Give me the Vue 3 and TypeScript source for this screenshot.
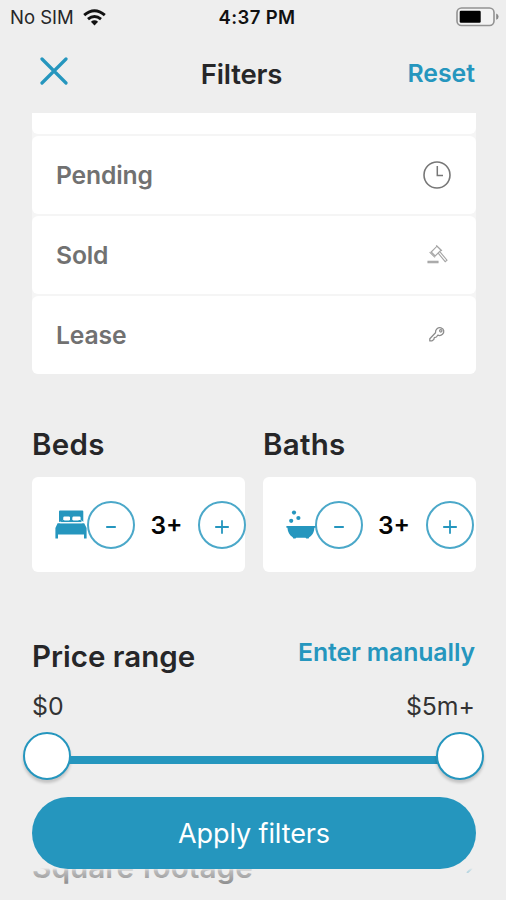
<script setup lang="ts">
import { ref } from 'vue'

type Counter = { key: 'beds' | 'baths'; label: string; count: number }

const statuses = ['Pending', 'Sold', 'Lease']
const counters = ref<Counter[]>([
  { key: 'beds', label: 'Beds', count: 3 },
  { key: 'baths', label: 'Baths', count: 3 },
])

function change(counter: Counter, step: number) {
  counter.count = Math.max(0, counter.count + step)
}
function reset() {
  counters.value.forEach((counter) => (counter.count = 0))
}
</script>

<template>
  <div class="screen">
    <div class="status-bar">
      <div class="carrier">
        <span>No SIM</span>
        <svg class="wifi" width="23" height="17" viewBox="0 0 23 17">
          <g fill="none" stroke="#111" stroke-width="2.9">
            <path d="M1.2 6.2Q11.5-2.8 21.8 6.2" />
            <path d="M5 10.2Q11.5 4.6 18 10.2" />
          </g>
          <path d="M7.9 12.7Q11.5 9.8 15.1 12.7L11.5 16.4Z" fill="#111" />
        </svg>
      </div>
      <span class="time">4:37 PM</span>
      <svg class="battery" width="43" height="20" viewBox="0 0 43 20">
        <rect x="1" y="1" width="37" height="17.5" rx="4.5" fill="#f3f3f3" stroke="#929292" stroke-width="1.6" />
        <rect x="3.7" y="3.7" width="21" height="12" rx="1.2" fill="#000" />
        <path d="M40.2 6.6Q42.6 7.4 42.6 9.7T40.2 12.8Z" fill="#888" />
      </svg>
    </div>

    <header class="header">
      <button class="close" aria-label="Close">
        <svg width="28" height="28" viewBox="0 0 28 28">
          <path d="M2 2L26 26M26 2L2 26" stroke="#2596be" stroke-width="3.2" stroke-linecap="round" />
        </svg>
      </button>
      <h1>Filters</h1>
      <button class="link reset" @click="reset">Reset</button>
    </header>

    <main class="content">
      <div class="status-list">
        <div class="status-row partial"></div>
        <div v-for="status in statuses" :key="status" class="status-row">
          <span>{{ status }}</span>
          <svg v-if="status === 'Pending'" width="30" height="30" viewBox="0 0 30 30" fill="none" stroke="#777">
            <circle cx="15" cy="15" r="13" stroke-width="1.6" />
            <path d="M15.3 6V15.5H21" stroke-width="1.5" />
          </svg>
          <svg v-else-if="status === 'Sold'" width="30" height="30" viewBox="0 0 30 30" fill="none" stroke="#a5a5a5" stroke-width="1.1">
            <path d="M9.2 12L15 6.2L19 10.2L13.2 16Z" />
            <path d="M7.6 12.2L13 17.3M14.2 5.3L20 10.8" />
            <path d="M16.2 13.2L23.2 21.7L25 20.2L17.8 11.7" />
            <path d="M6 21.2H16V22.7H6Z" fill="#aaa" />
          </svg>
          <svg v-else width="30" height="30" viewBox="0 0 30 30" fill="none" stroke="#8b8b8b" stroke-width="1.25" stroke-linejoin="round">
            <path d="M13.5 12.7C13.2 9.4 16 7.1 19 7.9C22.2 8.8 22.6 12.4 20.5 14.3C19 15.7 17.2 15.7 15.8 15.1L14.4 17L12.3 17.6L11.8 19.5L9.8 20.9H7.8V18.7Z" />
            <circle cx="18.8" cy="10.8" r="1.2" />
          </svg>
        </div>
      </div>

      <section class="counters">
        <div v-for="counter in counters" :key="counter.key" class="counter">
          <h2>{{ counter.label }}</h2>
          <div class="counter-card" :class="counter.key">
            <svg v-if="counter.key === 'beds'" class="room-icon" width="32" height="29" viewBox="0 0 32 29">
              <path d="M4 12V1.4Q4 .4 5 .4H27.3Q28.3 .4 28.3 1.4V12L25.6 10V7.6Q25.6 6.5 24.5 6.5H18.6Q17.5 6.5 17.5 7.6V10H15V7.6Q15 6.5 13.9 6.5H9.4Q8.3 6.5 8.3 7.6V10L6.5 12Z" fill="#2596be" />
              <path d="M8.3 9.9H25.6L27 12.3H5.4Z" fill="#2596be" />
              <rect x="8.8" y="7" width="6" height="3.5" rx="1" fill="#fff" />
              <rect x="17.6" y="7" width="6.4" height="3.5" rx="1" fill="#fff" />
              <path d="M2.6 13.3H29.2L31.6 18V28.5H29V24.6H3V28.5H.4V18Z" fill="#2596be" />
              <path d="M4.8 11.6L5.5 12.8H26.8L27.6 11.6" fill="none" stroke="#fff" stroke-width="1.1" />
            </svg>
            <svg v-else class="room-icon" width="30" height="29" viewBox="0 0 30 29" fill="#2596be">
              <circle cx="8" cy="2.6" r="2.1" />
              <circle cx="12.4" cy="8" r="2.1" />
              <circle cx="5.2" cy="10.8" r="2.1" />
              <path d="M.4 16H29.6V17.8H28.4C28 22.5 26.6 25.2 23.2 27.3L22.6 28.5H20.2L19.6 27.7H10.2L9.5 28.5H7.3L6.7 27.3C3.3 25.2 1.8 22 1.4 17.8H.4Z" />
            </svg>
            <button class="round" aria-label="Decrease" @click="change(counter, -1)">
              <svg width="16" height="16" viewBox="0 0 16 16"><path d="M3.2 8H12.8" stroke="#2596be" stroke-width="2" /></svg>
            </button>
            <span class="count">{{ counter.count }}+</span>
            <button class="round" aria-label="Increase" @click="change(counter, 1)">
              <svg width="16" height="16" viewBox="0 0 16 16"><path d="M1.2 8H14.8M8 1.2V14.8" stroke="#2596be" stroke-width="1.8" /></svg>
            </button>
          </div>
        </div>
      </section>

      <section class="price">
        <div class="price-head">
          <h2>Price range</h2>
          <button class="link manual">Enter manually</button>
        </div>
        <div class="price-values">
          <span class="min">$0</span>
          <span class="max">$5m+</span>
        </div>
        <div class="slider">
          <span class="thumb"></span>
          <span class="track"></span>
          <span class="thumb"></span>
        </div>
      </section>

      <div class="next-section">
        <h2>Square footage</h2>
        <svg width="12" height="12" viewBox="0 0 12 12"><path d="M3 12L8 7" stroke="#2596be" stroke-width="1.8" /></svg>
      </div>
    </main>

    <div class="footer">
      <button class="apply">Apply filters</button>
    </div>
  </div>
</template>

<style>
body {
  margin: 0;
  background: #eee;
}
</style>

<style scoped>
.screen {
  position: relative;
  display: flex;
  flex-direction: column;
  width: 506px;
  height: 900px;
  overflow: hidden;
  background: #eee;
  color: #262628;
  font-family: Inter, 'Liberation Sans', sans-serif;
}
h1,
h2 {
  margin: 0;
  font-weight: 600;
  white-space: nowrap;
}
button {
  padding: 0;
  border: 0;
  background: none;
  font: inherit;
  white-space: nowrap;
}
svg {
  display: block;
  flex: none;
}
.status-bar {
  display: grid;
  grid-template-columns: 1fr auto 1fr;
  align-items: center;
  height: 34px;
  padding: 0 7px 0 10px;
  box-sizing: border-box;
  font-size: 18.5px;
}
.carrier {
  display: flex;
  align-items: center;
  gap: 9px;
}
.time {
  padding-left: 5px;
  font-weight: 600;
  letter-spacing: 0.35px;
  color: #111;
}
.battery {
  justify-self: end;
}
.header {
  display: grid;
  grid-template-columns: 1fr auto 1fr;
  align-items: center;
  height: 79px;
  padding: 0 31px 0 40px;
  box-sizing: border-box;
}
.close {
  justify-self: start;
  padding-bottom: 5px;
}
h1 {
  padding-right: 32px;
  font-size: 27.5px;
  letter-spacing: -0.15px;
}
.link {
  color: #2596be;
  font-weight: 600;
  font-size: 24.8px;
}
.reset {
  justify-self: end;
  padding-bottom: 1px;
}
.content {
  display: flex;
  flex-direction: column;
  padding: 0 30px 0 32px;
}
.status-list {
  display: flex;
  flex-direction: column;
  gap: 2px;
  border-radius: 0 0 6px 6px;
  background: #f5f5f5;
}
.status-row {
  display: flex;
  align-items: center;
  justify-content: space-between;
  height: 78px;
  padding: 0 24px;
  border-radius: 6px;
  background: #fff;
  color: #717171;
  font-size: 24.7px;
  font-weight: 600;
  letter-spacing: -0.15px;
}
.partial {
  height: 21px;
  border-radius: 0 0 6px 6px;
}
.counters {
  display: grid;
  grid-template-columns: 213px 213px;
  gap: 18px;
  margin-top: 50px;
}
h2 {
  height: 40px;
  font-size: 29.5px;
  line-height: 40px;
}
.counter h2 {
  letter-spacing: 0.3px;
}
.counter-card {
  display: flex;
  align-items: center;
  height: 95px;
  margin-top: 13px;
  padding-left: 23px;
  box-sizing: border-box;
  border-radius: 6px;
  background: #fff;
}
.room-icon {
  position: relative;
  z-index: 1;
}
.baths .room-icon {
  margin-right: -1.5px;
}
.round {
  display: flex;
  flex: none;
  align-items: center;
  justify-content: center;
  width: 48px;
  height: 48px;
  padding-top: 4px;
  box-sizing: border-box;
  border: 2px solid #4ba8c9;
  border-radius: 50%;
}
.count {
  width: 63px;
  flex: none;
  color: #050505;
  font-size: 24.5px;
  font-weight: 600;
  text-align: center;
}
.price {
  margin-top: 62px;
}
.price-head {
  display: flex;
  justify-content: space-between;
  height: 44px;
}
.price-head h2 {
  line-height: 44px;
}
.manual {
  height: 36px;
  line-height: 35px;
  margin-right: 1px;
  letter-spacing: -0.1px;
}
.price-values {
  display: flex;
  justify-content: space-between;
  height: 54px;
  line-height: 56px;
  padding-right: 1px;
  color: #333;
  font-size: 24.8px;
}
.slider {
  display: flex;
  align-items: center;
  height: 48px;
  margin: 0 -8px 0 -9px;
}
.thumb {
  flex: none;
  width: 48px;
  height: 48px;
  box-sizing: border-box;
  border: 2.5px solid #2596be;
  border-radius: 50%;
  background: #fff;
  box-shadow: 0 3px 3px rgba(0, 0, 0, 0.18);
}
.track {
  flex: 1;
  height: 8px;
  margin: 7px -2px 0;
  background: #2596be;
}
.next-section {
  display: flex;
  justify-content: space-between;
  align-items: center;
  margin-top: 67px;
}
.next-section h2 {
  font-size: 29.8px;
}
.footer {
  position: absolute;
  inset: 785px 0 0;
  display: flex;
  align-items: flex-start;
  padding: 12px 30px 0 32px;
  background: linear-gradient(#eee 83px, rgba(238, 238, 238, 0.75) 86px, rgba(238, 238, 238, 0.5) 100px);
}
.apply {
  width: 444px;
  height: 72px;
  border-radius: 36px;
  background: #2596be;
  color: #fff;
  font-size: 27px;
  letter-spacing: -0.1px;
}
</style>
